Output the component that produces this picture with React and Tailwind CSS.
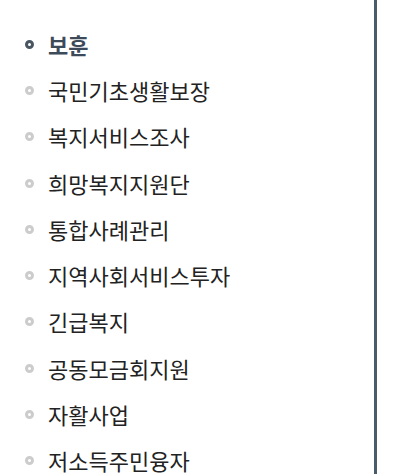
const ITEMS = [
  '보훈',
  '국민기초생활보장',
  '복지서비스조사',
  '희망복지지원단',
  '통합사례관리',
  '지역사회서비스투자',
  '긴급복지',
  '공동모금회지원',
  '자활사업',
  '저소득주민융자',
];

export default function App() {
  return (
    <div className="h-[474px] w-[420px] overflow-hidden bg-white">
      <div
        className="h-full w-[377px] border-r-[3px] border-[#485c6c] pt-[21px]"
        style={{ fontFamily: '"Noto Sans CJK KR", "Noto Sans", sans-serif' }}
      >
        <ul>
          {ITEMS.map((item, i) => (
            <li key={item} className="flex h-[46.3px] items-center pl-[25px]">
              {i === 0 ? (
                <span className="h-[9px] w-[9px] shrink-0 rounded-full border-[3px] border-[#4a5562] bg-white" />
              ) : (
                <span className="h-[9px] w-[9px] shrink-0 rounded-full border-[3px] border-[#cccccc] bg-white" />
              )}
              <span
                className={
                  i === 0
                    ? 'ml-[14px] text-[22px] font-bold text-[#3d4a5a]'
                    : 'ml-[14px] text-[22px] text-[#222222]'
                }
              >
                {item}
              </span>
            </li>
          ))}
        </ul>
      </div>
    </div>
  );
}
